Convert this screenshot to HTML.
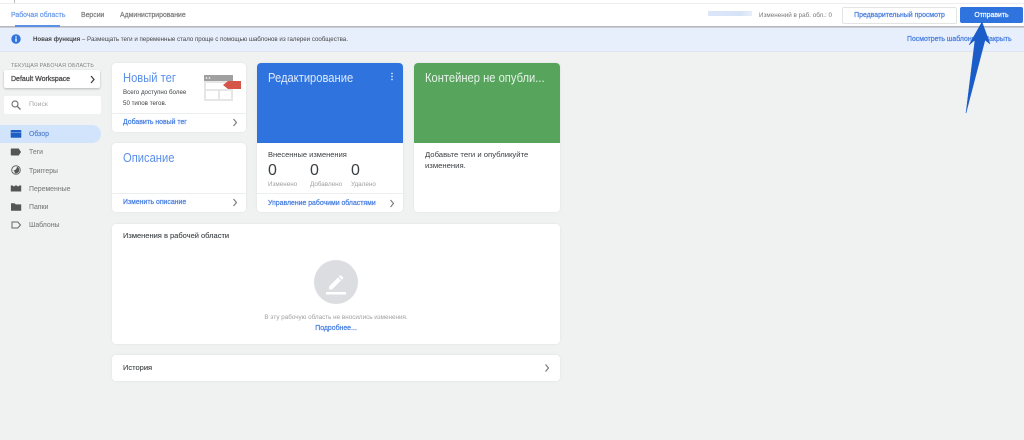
<!DOCTYPE html>
<html lang="ru">
<head>
<meta charset="utf-8">
<title>Рабочая область</title>
<style>
html,body{margin:0;padding:0}
body{width:1024px;height:440px;overflow:hidden;background:#f0f2f2;position:relative;font-family:"Liberation Sans","Noto Sans CJK SC",sans-serif;color:#3c4043}
#w{position:absolute;left:0;top:0;width:1024px;height:440px;filter:blur(.3px)}
.a{position:absolute;white-space:nowrap}
.card{position:absolute;background:#fff;border-radius:4px;box-shadow:0 0 2px rgba(0,0,0,.08);overflow:hidden}
.line{position:absolute;left:0;right:0;height:1px;background:#eceeee}
.link{color:#4a80e0;font-size:6.900px;-webkit-text-stroke:.25px #4a80e0}
.nav{font-size:6.900px;color:#7a7a7a;top:11px;line-height:10px;-webkit-text-stroke:.2px #7a7a7a}
.side{font-size:6.900px;color:#808080;left:29px;line-height:10px;-webkit-text-stroke:.1px #808080}
.h{font-size:13px;color:#5a90e8;line-height:16px;transform:scaleX(.86);transform-origin:0 0}
svg{position:absolute;display:block}
</style>
</head>
<body>
<div id="w">
<div class="a" style="left:0;top:0;width:1024px;height:3px;background:#fff;border-bottom:1px solid #eceeee"></div>
<div class="a" style="left:14px;top:0;width:1px;height:3px;background:#bbb"></div>

<div class="a" style="left:0;top:27px;width:1024px;height:24px;background:#e8effc;border-bottom:1px solid #e0e5ee"></div>
<div class="a" style="left:0;top:26px;width:1024px;height:2px;background:linear-gradient(#a9abae,#d6dae2)"></div>
<div class="a" style="left:0;top:4px;width:1024px;height:22px;background:#fff"></div>
<div class="a nav" style="left:11px;color:#6a9ae8;-webkit-text-stroke:.2px #6a9ae8">Рабочая область</div>
<div class="a" style="left:15px;top:25px;width:45px;height:2px;background:#5a90e8"></div>
<div class="a nav" style="left:81px">Версии</div>
<div class="a nav" style="left:120px">Администрирование</div>

<div class="a" style="left:708px;top:11px;width:44px;height:5px;background:linear-gradient(90deg,#dbe7f8 0,#d6e3f7 75%,#e8effa 100%)"></div>
<div class="a" style="left:759px;top:11px;font-size:6.300px;line-height:9px;color:#777">Изменений в раб. обл.: 0</div>
<div class="a" style="left:842px;top:7px;width:113px;height:15px;background:#fff;border:1px solid #e3e5e5;border-radius:2px;text-align:center;line-height:15px;font-size:6.900px;color:#4a80e0;-webkit-text-stroke:.25px #4a80e0">Предварительный просмотр</div>
<div class="a" style="left:960px;top:7px;width:63px;height:16px;background:#2f74de;border-radius:2px;text-align:center;line-height:17px;font-size:6.900px;color:#fff;-webkit-text-stroke:.2px #fff">Отправить</div>

<svg style="left:11px;top:34px" width="11" height="11" viewBox="0 0 11 11"><circle cx="5" cy="5" r="4.700" fill="#2f74de"/><rect x="4.300" y="4.400" width="1.400" height="3.300" fill="#fff"/><rect x="4.300" y="2.300" width="1.400" height="1.300" fill="#fff"/></svg>
<div class="a" style="left:33px;top:34.500px;font-size:6.150px;line-height:9px;color:#444"><b>Новая функция</b> – Размещать теги и переменные стало проще с помощью шаблонов из галереи сообщества.</div>
<div class="a link" style="left:907px;top:34.500px;line-height:9px">Посмотреть шаблоны</div>
<div class="a link" style="left:985px;top:34.500px;line-height:9px">Закрыть</div>

<div class="a" style="left:11px;top:61.500px;font-size:5.300px;line-height:8px;color:#808080;letter-spacing:.2px">ТЕКУЩАЯ РАБОЧАЯ ОБЛАСТЬ</div>
<div class="a" style="left:4px;top:70px;width:96px;height:18px;background:#fff;border-radius:2px;box-shadow:0 1px 2px rgba(0,0,0,.25)"></div>
<div class="a" style="left:11px;top:75px;font-size:7px;line-height:10px;color:#444;-webkit-text-stroke:.25px #444">Default Workspace</div>
<svg style="left:89px;top:75px" width="7" height="9" viewBox="0 0 7 9"><path d="M2 1l3 3.500L2 8" fill="none" stroke="#444" stroke-width="1.300"/></svg>
<div class="a" style="left:4px;top:96px;width:97px;height:18px;background:#fff;border-radius:2px"></div>
<svg style="left:10px;top:99px" width="12" height="12" viewBox="0 0 12 12"><circle cx="5" cy="5" r="3" fill="none" stroke="#777" stroke-width="1.200"/><path d="M7.200 7.200L10.500 10.500" stroke="#777" stroke-width="1.400"/></svg>
<div class="a" style="left:29px;top:100px;font-size:6.800px;line-height:10px;color:#a5a5a5">Поиск</div>

<div class="a" style="left:0;top:125px;width:101px;height:18px;background:#d2e3fc;border-radius:0 9px 9px 0"></div>
<svg style="left:10px;top:128px" width="12" height="12" viewBox="0 0 12 12"><path d="M1.500 2h9a.8.8 0 0 1 .8.8v6.200a.8.8 0 0 1-.8.8h-9a.8.8 0 0 1-.8-.8V2.800a.8.8 0 0 1 .8-.8z" fill="#1f5fc4"/><rect x=".7" y="4" width="10.600" height=".6" fill="#8fb4ea"/></svg>
<div class="a side" style="top:130px;color:#5a86d0;-webkit-text-stroke:.2px #5a86d0">Обзор</div>
<svg style="left:10px;top:146px" width="12" height="12" viewBox="0 0 12 12"><path d="M1.500 2.500h7.200L11 6 8.700 9.500H1.500a.7.7 0 0 1-.7-.7V3.200a.7.7 0 0 1 .7-.7z" fill="#555"/></svg>
<div class="a side" style="top:148px">Теги</div>
<svg style="left:10px;top:164px" width="12" height="12" viewBox="0 0 12 12"><circle cx="6" cy="6" r="4.300" fill="none" stroke="#666" stroke-width="1"/><path d="M7 2.800A3.400 3.400 0 0 1 9.300 6 3.400 3.400 0 0 1 5 9.200 3.500 3.500 0 0 0 3.500 6.500 4 4 0 0 0 7 2.800z" fill="#555"/></svg>
<div class="a side" style="top:166.500px">Триггеры</div>
<svg style="left:10px;top:182px" width="12" height="12" viewBox="0 0 12 12"><path d="M.8 3.500h2.200v.8h1.800v-.8h2.400v.8h1.800v-.8h2.200v6H.8z" fill="#555"/></svg>
<div class="a side" style="top:184.500px">Переменные</div>
<svg style="left:10px;top:201px" width="12" height="12" viewBox="0 0 12 12"><path d="M1 2.200h3.600l1.100 1.200h5.500v6.400H1z" fill="#555"/></svg>
<div class="a side" style="top:202.500px">Папки</div>
<svg style="left:10px;top:219px" width="12" height="12" viewBox="0 0 12 12"><path d="M2 3h5.800l2.700 3-2.700 3H2z" fill="none" stroke="#666" stroke-width="1"/></svg>
<div class="a side" style="top:221px">Шаблоны</div>

<div class="card" style="left:112px;top:63px;width:134px;height:69px">
  <div class="a h" style="left:11px;top:7px">Новый тег</div>
  <div class="a" style="left:11px;top:24px;font-size:6.200px;line-height:11px;color:#3c4043">Всего доступно более<br>50 типов тегов.</div>
  <svg style="left:92px;top:12px" width="37" height="28" viewBox="0 0 37 28"><rect x="0" y="0" width="29" height="26" fill="#e6e6e6"/><rect x="0" y="0" width="29" height="6" fill="#a0a0a0"/><circle cx="2.500" cy="3" r=".8" fill="#fff"/><circle cx="5.500" cy="3" r=".8" fill="#fff"/><rect x="2" y="8" width="25" height="6" fill="#fff"/><rect x="2" y="16" width="12" height="8" fill="#fff"/><rect x="16" y="16" width="11" height="8" fill="#fff"/><path d="M24 6h13v8H24l-5-4z" fill="#d5554a"/></svg>
  <div class="line" style="top:50px"></div>
  <div class="a link" style="left:11px;top:55px;line-height:10px">Добавить новый тег</div>
  <svg style="left:119px;top:55px" width="8" height="9" viewBox="0 0 8 9"><path d="M2.500 1l3 3.500-3 3.500" fill="none" stroke="#777" stroke-width="1.100"/></svg>
</div>

<div class="card" style="left:112px;top:143px;width:134px;height:69px">
  <div class="a h" style="left:11px;top:7px">Описание</div>
  <div class="line" style="top:50px"></div>
  <div class="a link" style="left:11px;top:55px;line-height:10px">Изменить описание</div>
  <svg style="left:119px;top:55px" width="8" height="9" viewBox="0 0 8 9"><path d="M2.500 1l3 3.500-3 3.500" fill="none" stroke="#777" stroke-width="1.100"/></svg>
</div>

<div class="card" style="left:257px;top:63px;width:146px;height:149px">
  <div class="a" style="left:0;top:0;width:146px;height:80px;background:#2f74de"></div>
  <div class="a h" style="left:11px;top:7px;color:#dfe9fb">Редактирование</div>
  <svg style="left:133px;top:9px" width="4" height="10" viewBox="0 0 4 10"><circle cx="2" cy="1.500" r=".9" fill="#cfe0fa"/><circle cx="2" cy="4.500" r=".9" fill="#cfe0fa"/><circle cx="2" cy="7.500" r=".9" fill="#cfe0fa"/></svg>
  <div class="a" style="left:11px;top:87px;font-size:7.500px;line-height:10px;color:#3c4043">Внесенные изменения</div>
  <div class="a" style="left:11px;top:98px;font-size:16px;line-height:20px;color:#3c4043">0</div>
  <div class="a" style="left:53px;top:98px;font-size:16px;line-height:20px;color:#3c4043">0</div>
  <div class="a" style="left:94px;top:98px;font-size:16px;line-height:20px;color:#3c4043">0</div>
  <div class="a" style="left:11px;top:117px;font-size:6.300px;line-height:9px;color:#a0a0a0">Изменено</div>
  <div class="a" style="left:53px;top:117px;font-size:6.300px;line-height:9px;color:#a0a0a0">Добавлено</div>
  <div class="a" style="left:94px;top:117px;font-size:6.300px;line-height:9px;color:#a0a0a0">Удалено</div>
  <div class="line" style="top:130px"></div>
  <div class="a link" style="left:11px;top:135.500px;line-height:10px">Управление рабочими областями</div>
  <svg style="left:131px;top:136px" width="8" height="9" viewBox="0 0 8 9"><path d="M2.500 1l3 3.500-3 3.500" fill="none" stroke="#777" stroke-width="1.100"/></svg>
</div>

<div class="card" style="left:414px;top:63px;width:146px;height:149px">
  <div class="a" style="left:0;top:0;width:146px;height:80px;background:#57a55d"></div>
  <div class="a h" style="left:11px;top:7px;color:#e6f2e7">Контейнер не опубли...</div>
  <div class="a" style="left:11px;top:86px;font-size:7.700px;line-height:11px;color:#3c4043">Добавьте теги и опубликуйте<br>изменения.</div>
</div>

<div class="card" style="left:112px;top:224px;width:448px;height:120px">
  <div class="a" style="left:11px;top:6px;font-size:7.500px;line-height:11px;color:#3c4043;-webkit-text-stroke:.1px #3c4043">Изменения в рабочей области</div>
  <svg style="left:202px;top:36px" width="44" height="44" viewBox="0 0 44 44"><circle cx="22" cy="22" r="22" fill="#dcdde0"/><path d="M15 26.500v3h3l9-9-3-3zM29 18.500a.8.8 0 0 0 0-1.100l-1.900-1.900a.8.8 0 0 0-1.100 0l-1.200 1.200 3 3z" fill="#fff"/><rect x="12" y="32" width="20" height="2.500" fill="#fff"/></svg>
  <div class="a" style="left:0;width:448px;text-align:center;top:89px;font-size:6.300px;line-height:9px;color:#a0a0a0">В эту рабочую область не вносились изменения.</div>
  <div class="a link" style="left:0;width:448px;text-align:center;top:99.500px;line-height:10px">Подробнее...</div>
</div>

<div class="card" style="left:112px;top:355px;width:448px;height:26px">
  <div class="a" style="left:11px;top:7px;font-size:7.500px;line-height:11px;color:#3c4043;-webkit-text-stroke:.1px #3c4043">История</div>
  <svg style="left:431px;top:8px" width="8" height="10" viewBox="0 0 8 10"><path d="M2.500 1.500l3 3.500-3 3.500" fill="none" stroke="#777" stroke-width="1.200"/></svg>
</div>

<svg style="left:0;top:0" width="1024" height="120" viewBox="0 0 1024 120"><path d="M982 22L990 44 985 40 966 113 975 40 969 45z" fill="#1a5cc8" stroke="#1a5cc8" stroke-width=".5" stroke-linejoin="round"/></svg>
</div>
</body>
</html>
